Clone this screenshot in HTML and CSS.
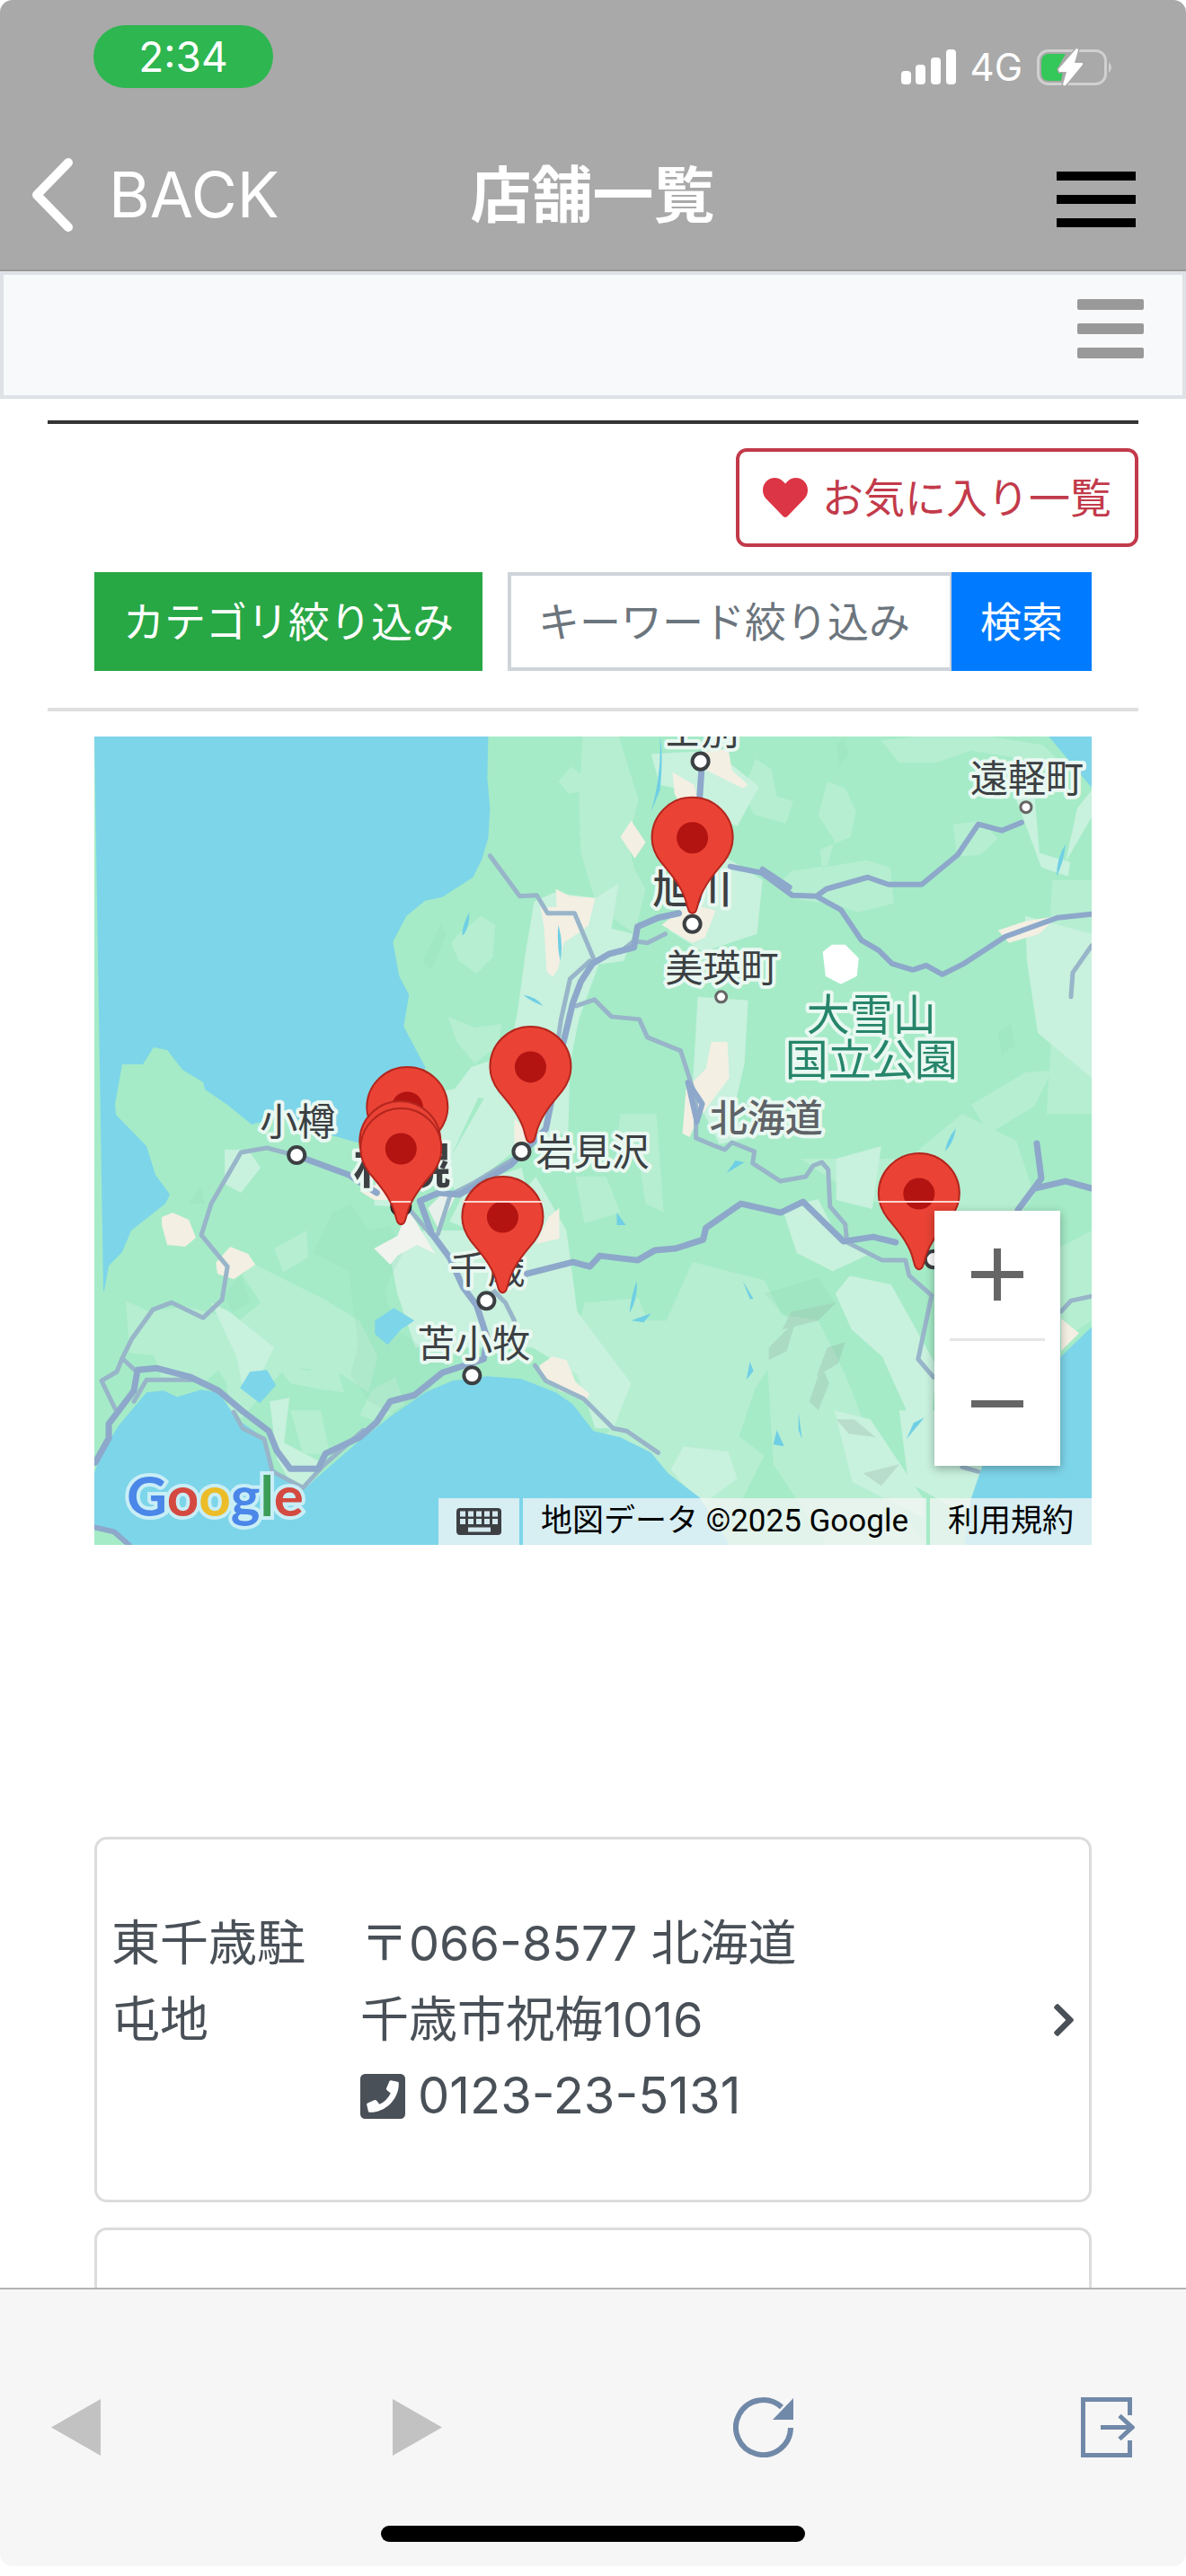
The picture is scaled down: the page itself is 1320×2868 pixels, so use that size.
FILE: index.html
```html
<!DOCTYPE html>
<html lang="ja">
<head>
<meta charset="utf-8">
<meta name="viewport" content="width=device-width, initial-scale=1">
<title>店舗一覧</title>
<link rel="stylesheet" href="styles.css">
</head>
<body>
<div class="screen">
  <header class="app-header">
    <div class="status-bar">
      <span class="clock">2:34</span>
      <div class="indicators">
        <svg class="signal" viewBox="0 0 61 40" aria-hidden="true">
          <g fill="#fff"><rect y="24" width="11" height="15" rx="4"/><rect x="16" y="17" width="11" height="22" rx="4"/><rect x="33" y="9" width="11" height="30" rx="4"/><rect x="50" width="11" height="39" rx="4"/></g>
        </svg>
        <span class="network">4G</span>
        <svg class="battery" viewBox="0 0 84 42" aria-hidden="true">
          <rect x="1.500" y="2.500" width="75" height="37" rx="11" fill="none" stroke="#d0d0d0" stroke-width="3"/>
          <path d="M80 15q6 6 0 12z" fill="#d0d0d0"/>
          <path d="M14 6H32L22 24l7 2-2 10H14q-9 0-9-9V15q0-9 9-9z" fill="#34c759"/>
          <path d="M44 0 24 23l1 3h8L29 40q1 2 3 1L51 18v-2h-9L46 2q0-2-2-2z" fill="#fff" stroke="#a9a9a9" stroke-width="3" paint-order="stroke"/>
        </svg>
      </div>
    </div>
    <div class="title-bar">
      <a class="back" href="#">
        <svg viewBox="0 0 46 82" aria-hidden="true"><path d="M41 5 6 41l35 36" fill="none" stroke="#fff" stroke-width="10" stroke-linecap="round" stroke-linejoin="round"/></svg>
        <span>BACK</span>
      </a>
      <h1>店舗一覧</h1>
      <button class="icon-button" type="button" aria-label="メニュー">
        <svg class="menu-icon" viewBox="0 0 88 62" aria-hidden="true"><path d="M0 0h88v10H0zM0 26h88v10H0zM0 52h88v10H0z"/></svg>
      </button>
    </div>
  </header>

  <nav class="site-nav">
    <button class="icon-button" type="button" aria-label="サイトメニュー">
      <svg class="toggle-icon" viewBox="0 0 74 66" aria-hidden="true"><g fill="#999"><rect width="74" height="12" rx="2"/><rect y="27" width="74" height="12" rx="2"/><rect y="54" width="74" height="12" rx="2"/></g></svg>
    </button>
  </nav>

  <main class="content">
    <div class="favorites">
      <a class="favorites-link" href="#">
        <svg viewBox="0 0 512 512" aria-hidden="true"><path fill="#dc3545" d="M462.3 62.600C407.500 15.900 326 24.300 275.700 76.200L256 96.500l-19.700-20.300C186.100 24.300 104.500 15.900 49.700 62.600c-62.800 53.600-66.100 149.800-9.900 207.900l193.500 199.800c12.500 12.900 32.800 12.900 45.300 0l193.500-199.800c56.300-58.100 53-154.300-9.800-207.900z"/></svg>
        <span>お気に入り一覧</span>
      </a>
    </div>

    <form class="filters">
      <button class="category" type="button">カテゴリ絞り込み</button>
      <div class="search">
        <input type="text" placeholder="キーワード絞り込み" aria-label="キーワード絞り込み">
        <button type="submit">検索</button>
      </div>
    </form>

    <section class="map" aria-label="地図">
      <svg class="map-canvas" viewBox="105 820 1109 900" preserveAspectRatio="xMidYMid slice">
        <rect x="105" y="820" width="1109" height="900" fill="#a5ebc7"/>
        <!-- lowlands -->
        <g fill="#b6eed1">
          <path d="M648 820h40l22 70-14 60 22 40-12 50-42-30-18-60-2-60z M840 845l18 12 6 30 18 5-8 25-36-10-12-28 10-22zM920 870l20 8 12 26-6 28-34 14 2 20 50-8 26 8 4 40-40 10-24-8-40-6-24-18 14-14 40-6 8-28-18-28zM980 825l40-5 80 0 60 10 20 20-40-4-60-10-40 14-40 0z"/>
          <path d="M1060 918l30-4 20 20-20 18-26 2zM510 1040l25-20 16 10-3 36-18 18-20-14-8-20zM498 1132l30 12 30-4-4 24-26 20-20-24zM621 870l14-16 14 10-3 18-14 2zM644 925l34-8 20 20 10 40-14 26-36-20z"/>
          <path d="M140 1448l26 12 40-6 60 16 24-20-20-30 10-14 40 20 40 20 40 24 20 40-10 40-30-20-60-10-30 34-20 24-16 2-2-40-16-26-22-16-20-2-10 14-40-4zM170 1505l20-10 30 4 30-8 4 24-24 22-50-2zM305 1390l36-20 2 30-28 16zM303 1512l40 14 30-10 10 34-30-4-30-6zM323 1570l34 0 10 50-30-2zM400 1575l20 8 30-20-10-30-26 14z"/>
          <path d="M650 1450l60-5 20 50 40-90 40 10 40 10 30 60-40 60-30 90-90 0-40-40-50-60zM720 1470l20 0 16 60-20 40-30-30zM690 1240l40 0 8 110-20-10-8-50-24-20zM850 1460l60 10 30 60 50 130 40 60h-110l-60-90zM890 1290l120 0 60-50 60 30 20 60-40 60-60-10-40-30-60-20zM1080 1230l60-36 30-2-20 40-50 30zM640 1310l34 0 16 40-40 12z"/>
          <path d="M1170 980l44 0v90l-30 26-18-30zM1170 1140l44 0v100l-50 0zM1120 1420l94-50v100l-60 40zM650 1620l70 30 40 50 60-20 30-60-80-60-80 20z"/>
        </g>
        <g fill="#c8f1de">
          <path d="M662 1000l26-16-8 50 24 6-10 30-28 4-22 60-10 50-2 76-34 10-26-42-40-6-28 60-8 24-60 6 28-54 12-40 30-6 18-24 42-14 10-50 8-60 10-60 22-10zM540 1220l50-16 4 60-50 40-36 24-16-24zM724 840l70-4 50 40-24 44-30-10-30-30-26-6zM800 950l48 30-6 60-60 20-38-24zM776 1110l56 4-4 70-14 60 30 20-44 10-30-60z"/>
          <path d="M596 1310l34 60 12 90 60 80-20 50-20 0-20-60-50-30-80 0-50 0-20-60-10-50 40-20 74 0zM500 1360l20-40 60-20 10 40-40 40zM420 1310l34 4-8 30-30-2zM250 1280l26 0 14 20-22 28-18-10zM255 1460l50 40-20 40-16 0-6-30-28-60zM300 1560l22-4-6 50 38 20-8 30-24-8-14-24z"/>
          <path d="M945 1420l46 10 50 90-4 50-20 20-36-80-34-30-18-40zM870 1345l40-10 20 40 40 20-44 20-40-20zM930 1290l50-14-10 70-40-10zM1000 1570l90 0 60-60 30 20-60 110-40 50-70-40zM1140 1020l74 20v160l-60-50-12-80zM1130 890l20-10 6 70 34 10-2 16-30-10zM1185 960l29-50v-30l-16 20zM760 1610l50 6 10 30-40 30-34-40zM928 1570l40 10 60 90 0 20-80-40z"/>
        </g>
        <g fill="#93dab8" opacity=".25">
          <path d="M210 1340l14-20 4 20zM370 1350l20-10 20 30 24-5 14 30-20 40 10 40-40 20-10-80-40-20zM250 1440l18-20 10 30-20 10zM470 1070l20-40 6 10-16 40zM400 1490l40-10 60 40-50 60-40-20-20-30zM1110 1150l14-10 4 24-14 10zM930 830l8-8 6 20-10 10zM850 1440l60-18 20 30-50 20z"/>
          <path d="M880 1460l50-10-20 20-40 10zM855 1500l30-30-10 34-20 10zM920 1500l20-6-8 24-24 14zM900 1560l14-40 8 20-12 30zM930 1580l20 0 24 20-30-4zM960 1640l40-10-20 24z" fill="#8fa69a"/>
        </g>
        <!-- towns -->
        <g fill="#f3efe3">
          <path d="M618 990l16 8 28 2-11 34-24 16-6 28-6 10-7-6-3-50-4-22h18zM690 932l12-18 16 24-12 18zM748 860l24 14 6 24-20 0-8-14zM780 838l30-4 4 24 18 16-6 4-40-20zM736 1030l30-24 30 8-12 30-14 6zM640 1000l22 0-8 32-14 0zM791 1160l18 0 2 40-18 24-18 24-8 18-8-4 4-50 22-22zM572 1245l18 20-2 20-16-6z"/>
          <path d="M180 1355l12-5 18 8 8 20-12 10-20-2-6-22zM240 1406l16-18 20 8 8 12-24 16-18-6zM600 1520l14-10 16 4 10 24 16 14-4 6-30-10-20-18zM596 1385l14-30 12-10 0 34zM1110 1036l30-10 36-6-20 20-34 10zM1180 1468l20 16-20 20zM400 1326l20-8 18 18-22 0z"/>
          <path d="M416 1390l26-14 12-30 30 50-20-10-22 12-8 10z" fill="#f1f3ef"/><path d="M476 1345l16-16 14 4-18 36z" fill="#e8f0ec"/>
        </g>
        <path d="M915 1060l10-8h15l15 15-2 20-18 9-17-9z" fill="#fff"/>
        <!-- sea and lakes -->
        <g fill="#7dd5e9">
          <path d="M105 820h438l-1 47 3 33-2 33-7 24-10 20-34 22-19 4-21 17-15 29 7 38 11 21-6 35 24 45-10 50-40 30-26 4-49-14-22-15-16 1-30 8-27-22-25-17-2-8-23-14-17-22-15-3-12 19h-23l-8 44 1 12 34 35 10 32 16 22-5 10-38 30-10 24-15 15-5 28h-1z"/>
          <path d="M105 1640l8-23 19-30 31-37 19-2 15 7 27-8 19 3 21 30 29 20 9 33 18 15 19 9 19-17 38-33 38-30 39-27 30-13 39-5 38 3 38 15 19 13 23 30 30 7 34 17 19 23 35 27 34 53H105z"/>
          <path d="M1214 1477l-34 33-88 123-12 35-8 52h142zM1166 820h48v57l-23-27zM417 1470l21-14 23 14-15 10-15 17-14-12zM278 1527l19-2 10 17-18 20-22-17z"/>
        </g>
        <path d="M105 1700l22 5 17 15h-39z" fill="#a5ebc7"/>
        <g fill="#6fcfe4">
          <path d="M522 1016q0 20-8 26 0-12 8-26zM621 1030q6 20 2 40-4-20-2-40zM582 1108q14 2 22 12-12-4-22-12zM1185 940q-2 20-10 36 0-20 10-36zM734 820q4 20 0 60l-10 24q12-40 10-84zM1063 1256q-2 16-12 26 2-14 12-26zM808 1306l10-14 10 2zM686 1350l10 14-10 0zM708 1426q2 18-8 36 2-20 8-36zM702 1470l22-8-8 10zM826 1426l12 20-4 0zM834 1516l4 10-8 10zM864 1592l8 18-12-2zM888 1572l4 30-4-10zM1028 1578l-20 24 8-18z"/>
        </g>
        <!-- roads -->
        <g fill="none" stroke="#8da8ca" stroke-linejoin="round" stroke-linecap="round">
          <g stroke-width="5" stroke="#98b5c9">
            <path d="M545 953l33 45 19-1 12 20h30l21 50M740 1040l-20 10-15-2-15 12M656 1070l-22 20-10 45-6 40M641 1120l20-7 19 19 31 3 9 20 37 15 17 53v44l19 8 13 5 8-8 25 10-2 13 31 20 28-5 8-12 10-4 7 8 2 41 17 20 2 20 39 20h26l4 17 25 22-15 71 17 20"/>
            <path d="M136 1512l11-22 23-32 21-8 35 17 21-20 6-37-29-35 11-35 33-57 29-5 34 9M136 1512l-6 15-17 10 15 31M136 1512l16 15M149 1560l14-24h50M575 1288l-50 30-24 12-14 44M455 1346l24 28M542 1430l20 20 10 20-4 18M595 1520l12 17 42 20 33 33 15 3 35 24M260 1572l10 18 24 12 9 36 34 18 22-24 45-40"/>
            <path d="M1180 1460l11-12 23-5M1214 1053l-21 30-2 27M1070 1633l18 5"/>
          </g>
          <g stroke-width="7">
            <path d="M755 1017l-23 5-23 10-4 23-27 7-19 11-13 20-9 24-11 46-19 94-39 40-57 33-23-2-21 9 13 36 20 27 15 33 15 20 12 37-4 23-46 15-31 25-27 7-15 23-19 17-38 18-8 17h-31l-15-20-9-22-29-22-27-23-31-15-38-10-21 2-4 23-28 37v16l-15 27"/>
            <path d="M331 1287l57 21 31 20M586 1418l51-13 19 5 11-12 42 5 19-11 23-2 31-10 3-13 39-27 44 10 25-12 45 44 33-5 25 6"/>
            <path d="M1153 1273l5 39-26 35M1151 1323l34-8 29 8M780 860l-2 30"/>
          </g>
          <g stroke-width="6">
            <path d="M812 965l35 7 34 25 27 1 27 15 23 34 19 11 15 15 23 7 15-5 18 10 24-12 46-30 58-21 38-4M908 998l11-8 46-13 23 8h37l40-33 23-34 26 7 22-9M848 968l30 20M105 1700l22 5 17 15M765 1205l16 24-6 20z"/>
          </g>
        </g>
        <!-- town markers -->
        <g fill="#fff" stroke="#3c4043" stroke-width="4">
          <circle cx="779" cy="848" r="9"/><circle cx="770" cy="1029" r="9"/><circle cx="580" cy="1282" r="9"/><circle cx="330" cy="1286" r="9"/><circle cx="541" cy="1448" r="9"/><circle cx="525" cy="1531" r="9"/><circle cx="1038" cy="1402" r="9"/>
          <g stroke="#666" stroke-width="3"><circle cx="802" cy="1110" r="6"/><circle cx="1141" cy="899" r="6"/></g>
        </g>
        <circle cx="446" cy="1343" r="12" fill="#222"/>
        <!-- place names -->
        <g class="place-names">
          <text x="780" y="829">士別</text><text x="1142" y="882">遠軽町</text>
          <text class="city" x="770" y="1006">旭川</text><text x="803" y="1093">美瑛町</text>
          <text x="331" y="1264">小樽</text><text x="659" y="1298">岩見沢</text>
          <text class="capital" x="447" y="1318">札幌</text><text x="542" y="1429">千歳</text>
          <text x="527" y="1511">苫小牧</text><text class="region" x="852" y="1260">北海道</text>
          <g class="park"><text x="969" y="1147">大雪山</text><text x="969" y="1197">国立公園</text></g>
        </g>
        <!-- shop pins -->
        <defs>
          <g id="pin"><path d="M0-1C-5-1-5-8-8-17-14-34-26-47-35-58-41-66-45-74-45-85A45 45 0 0 1 45-85C45-74 41-66 35-58 26-47 14-34 8-17 5-8 5-1 0-1Z" fill="#ea4335" stroke="#b3261e" stroke-width="2"/><circle cy="-85" r="17.500" fill="#b31412"/></g>
        </defs>
        <use href="#pin" x="770" y="1018"/><use href="#pin" x="590" y="1273"/>
        <use href="#pin" x="453" y="1318"/><use href="#pin" x="445" y="1356"/><use href="#pin" x="446" y="1364"/>
        <use href="#pin" x="559" y="1440"/><use href="#pin" x="1022" y="1414"/>
        <path d="M435 1338h22M514 1338h90M977 1338h90" stroke="#fbd5d0" stroke-width="2"/>
      </svg>

      <a class="map-logo" href="#" aria-label="Google"><span class="blue">G</span><span class="red">o</span><span class="yellow">o</span><span class="blue">g</span><span class="green">l</span><span class="red">e</span></a>

      <div class="zoom-control">
        <button type="button" aria-label="拡大"><svg viewBox="0 0 58 58" aria-hidden="true"><path d="M25 0h8v25h25v8H33v25h-8V33H0v-8h25z" fill="#666"/></svg></button>
        <button type="button" aria-label="縮小"><svg viewBox="0 0 58 58" aria-hidden="true"><path d="M0 25h58v8H0z" fill="#666"/></svg></button>
      </div>

      <div class="map-credits">
        <button type="button" aria-label="キーボード ショートカット">
          <svg viewBox="0 0 50 30" aria-hidden="true"><rect width="50" height="30" rx="4" fill="#3c4043"/><path d="M4 3.500h6v6H4zM13 3.500h6v6h-6zM22 3.500h6v6h-6zM31 3.500h6v6h-6zM40 3.500h6v6h-6zM4 12h6v6H4zM13 12h6v6h-6zM22 12h6v6h-6zM31 12h6v6h-6zM40 12h6v6h-6zM13 21.500h25v5H13z" fill="#d5eaf0"/></svg>
        </button>
        <span>地図データ ©2025 Google</span>
        <a href="#">利用規約</a>
      </div>
    </section>

    <section class="shops">
      <a class="shop" href="#">
        <span class="shop-name">東千歳駐屯地</span>
        <span class="shop-info">
          <span>〒066-8577 北海道<br>千歳市祝梅1016</span>
          <span class="phone">
            <svg viewBox="0 32 448 448" aria-hidden="true"><path transform="matrix(-1 0 0 1 448 0)" fill="#495057" d="M400 32H48A48 48 0 0 0 0 80v352a48 48 0 0 0 48 48h352a48 48 0 0 0 48-48V80a48 48 0 0 0-48-48zm-16.390 307.370l-15 65A15 15 0 0 1 354 416C194 416 64 286.290 64 126a15.700 15.700 0 0 1 11.630-14.610l65-15A18.230 18.230 0 0 1 144 96a16.270 16.270 0 0 1 13.790 9.090l30 70A17.900 17.900 0 0 1 189 181a17 17 0 0 1-5.500 11.610l-37.890 31a231.910 231.910 0 0 0 110.780 110.780l31-37.890A17 17 0 0 1 299 291a17.850 17.850 0 0 1 5.910 1.210l70 30A16.250 16.250 0 0 1 384 336a17.410 17.410 0 0 1-.39 3.370z"/></svg>
            <span>0123-23-5131</span>
          </span>
        </span>
        <svg class="chevron" viewBox="27 37 266 438" aria-hidden="true"><path fill="#495057" d="M285.476 272.971L91.132 467.314c-9.373 9.373-24.569 9.373-33.941 0l-22.667-22.667c-9.357-9.357-9.375-24.522-.04-33.901L188.505 256 34.484 101.255c-9.335-9.379-9.317-24.544.04-33.901l22.667-22.667c9.373-9.373 24.569-9.373 33.941 0L285.475 239.030c9.373 9.372 9.373 24.568.001 33.941z"/></svg>
      </a>
      <div class="shop"></div>
    </section>
  </main>

  <footer class="browser-bar">
    <div class="browser-actions">
      <button class="icon-button" type="button" aria-label="戻る" disabled><svg viewBox="0 0 67 67" aria-hidden="true"><path d="M0 33.500 55 2v63z" fill="#c2c2c2"/></svg></button>
      <button class="icon-button" type="button" aria-label="進む" disabled><svg viewBox="0 0 67 67" aria-hidden="true"><path d="M55 33.500 0 2v63z" fill="#c2c2c2"/></svg></button>
      <button class="icon-button" type="button" aria-label="再読み込み"><svg viewBox="0 0 67 67" aria-hidden="true"><path d="M64 34A30.500 30.500 0 1 1 54 11" fill="none" stroke="#7189a8" stroke-width="6"/><path d="M67 1v24H44z" fill="#7189a8"/></svg></button>
      <button class="icon-button" type="button" aria-label="終了"><svg viewBox="0 0 60 67" preserveAspectRatio="xMaxYMid meet" aria-hidden="true"><g fill="none" stroke="#7189a8" stroke-width="5"><path d="M54.500 20V2.500h-52v62h52V48"/><path d="M22 33.500h34M43 20.500l14 13-14 13"/></g></svg></button>
    </div>
    <div class="home-indicator"></div>
  </footer>
</div>
</body>
</html>
```
FILE: styles.css
```css
*, *::before, *::after { box-sizing: border-box; }

body {
  margin: 0;
  background: #fff;
  color: #495057;
  font-family: Inter, "Noto Sans CJK JP", sans-serif;
  font-size: 46px;
  line-height: 64px;
}

button, input { font: inherit; margin: 0; border: 0; border-radius: 0; }
button { padding: 0; cursor: pointer; }
a { color: inherit; text-decoration: none; }
svg { display: block; }
.icon-button { background: none; }

.screen {
  display: flex;
  flex-direction: column;
  height: 100vh;
  padding-bottom: 11px;
}

/* header */
.app-header {
  flex: none;
  background: #a9a9a9;
  border-bottom: 2px solid #989898;
  border-radius: 14px 14px 0 0;
  color: #fff;
}
.status-bar {
  display: flex;
  justify-content: space-between;
  align-items: flex-start;
  height: 134px;
  padding: 28px 82px 0 104px;
}
.clock {
  width: 200px;
  border-radius: 36px;
  background: #2eb650;
  line-height: 70px;
  text-align: center;
}
.indicators {
  display: flex;
  align-items: center;
  gap: 16px;
  padding-top: 26px;
}
.signal { width: 61px; height: 40px; }
.network { font-size: 42px; line-height: 42px; }
.battery { width: 84px; height: 42px; }
.title-bar {
  display: grid;
  grid-template-columns: 1fr auto 1fr;
  align-items: center;
  height: 166px;
  padding: 0 56px 0 35px;
}
.back {
  display: flex;
  align-items: center;
  gap: 40px;
  font-size: 70px;
}
.back svg { width: 46px; height: 82px; }
.title-bar h1 { margin: 0 -10px 0 10px; font-size: 68px; font-weight: 700; }
.title-bar .icon-button { justify-self: end; padding-top: 10px; }
.menu-icon { width: 88px; height: 62px; }

.site-nav {
  flex: none;
  display: flex;
  justify-content: flex-end;
  align-items: flex-start;
  height: 142px;
  padding: 27px 43px;
  border: 4px solid #dee2e6;
  background: #f8f9fa;
}
.toggle-icon { width: 74px; height: 66px; }

/* content */
.content {
  flex: 1 1 0;
  min-height: 0;
  overflow: hidden;
  margin-top: 24px;
  padding: 0 53px;
}
.favorites {
  display: flex;
  justify-content: flex-end;
  padding: 27px 0 28px;
  border-top: 4px solid #343434;
}
.favorites-link {
  display: flex;
  align-items: center;
  gap: 16px;
  height: 110px;
  padding: 0 26px;
  border: 4px solid #c23a4a;
  border-radius: 12px;
  color: #c23a4a;
}
.favorites-link svg { width: 50px; height: 50px; }

.filters {
  display: flex;
  gap: 28px;
  padding: 0 52px 41px;
  border-bottom: 4px solid #dfdfdf;
}
.category {
  flex: none;
  height: 110px;
  padding: 0 32px;
  background: #28a745;
  color: #fff;
}
.search { flex: 1; display: flex; min-width: 0; }
.search input {
  flex: 1;
  min-width: 0;
  height: 110px;
  padding: 0 30px;
  border: 4px solid #ced4da;
  border-right-width: 2px;
}
.search input::placeholder { color: #6c757d; opacity: 1; }
.search button {
  height: 110px;
  padding: 0 32px;
  background: #007bff;
  color: #fff;
}

/* map */
.map {
  position: relative;
  height: 900px;
  margin: 28px 52px 0;
  overflow: hidden;
  background: #a5ebc7;
}
.map-canvas { width: 100%; height: 100%; }
.place-names {
  fill: #3c4043;
  stroke: #e9f8f1;
  stroke-width: 8px;
  stroke-linejoin: round;
  paint-order: stroke;
  font-family: "Noto Sans CJK JP", sans-serif;
  font-size: 42px;
  text-anchor: middle;
}
.city { font-size: 44px; font-weight: 500; }
.capital { font-size: 54px; font-weight: 700; }
.region { fill: #5f6368; font-weight: 500; }
.park { fill: #26856a; font-size: 48px; }

.map-logo {
  position: absolute;
  left: 36px;
  bottom: 16px;
  font-family: Lato, sans-serif;
  font-size: 62px;
  font-weight: 700;
  line-height: 80px;
  -webkit-text-stroke: 8px #c9eef6;
  paint-order: stroke fill;
}
.blue { color: #4a87e8; }
.red { color: #d44a41; }
.yellow { color: #ecbd28; }
.green { color: #3c9d57; }

.zoom-control {
  position: absolute;
  right: 35px;
  bottom: 88px;
  width: 140px;
  padding: 0 17px;
  background: #fff;
  box-shadow: 0 3px 10px rgba(0, 0, 0, .3);
}
.zoom-control button {
  display: flex;
  align-items: center;
  justify-content: center;
  width: 100%;
  height: 142px;
  background: none;
}
.zoom-control button + button { border-top: 3px solid #e6e6e6; }
.zoom-control svg { width: 58px; height: 58px; }

.map-credits {
  position: absolute;
  right: 0;
  bottom: 0;
  display: flex;
  gap: 4px;
  color: #000;
  font-family: Roboto, "Noto Sans CJK JP", sans-serif;
  font-size: 35px;
  line-height: 52px;
}
.map-credits > * {
  padding: 0 20px;
  background: rgba(245, 245, 245, .75);
}
.map-credits svg { width: 50px; height: 30px; }

/* shop list */
.shops {
  display: flex;
  flex-direction: column;
  gap: 28px;
  margin: 325px 52px 0;
}
.shop {
  display: flex;
  align-items: flex-start;
  min-height: 407px;
  padding: 73px 16px;
  border: 3px solid #dcdcdc;
  border-radius: 14px;
  font-size: 54px;
  line-height: 85px;
}
.shop-name { flex: none; width: 250px; margin-right: 27px; padding-right: 30px; }
.shop-info { flex: 1; }
.phone { display: flex; align-items: center; gap: 14px; font-size: 56px; }
.phone svg { width: 50px; height: 50px; }
.chevron { align-self: center; width: 24px; height: 36px; }

/* browser toolbar */
.browser-bar {
  flex: none;
  border-top: 2px solid #b2b2b2;
  border-radius: 0 0 14px 14px;
  background: #f6f6f6;
}
.browser-actions {
  display: flex;
  justify-content: space-between;
  padding: 120px 57px 76px;
}
.browser-actions svg { width: 67px; height: 67px; }
.home-indicator {
  width: 472px;
  height: 18px;
  margin: 0 auto 27px;
  border-radius: 9px;
  background: #000;
}
```
